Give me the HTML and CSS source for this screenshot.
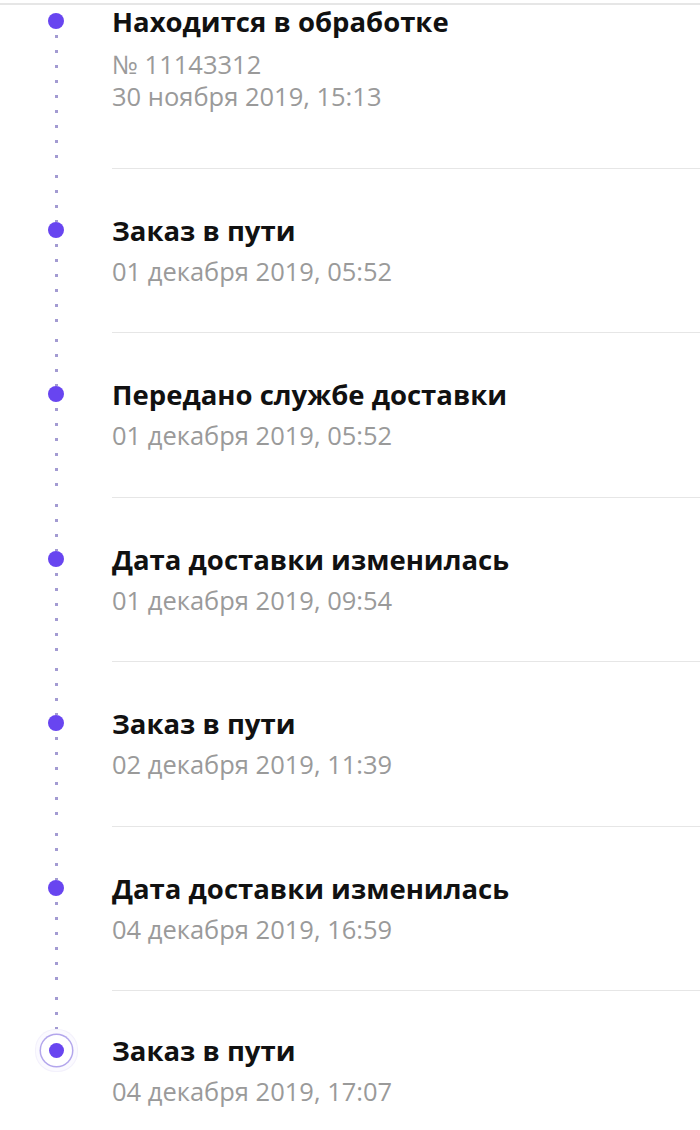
FILE: index.html
```html
<!DOCTYPE html>
<html lang="ru">
<head>
    <meta charset="UTF-8">
    <meta name="viewport" content="width=device-width, initial-scale=1.0">
    <title>Статус заказа</title>
    <link rel="stylesheet" href="styles.css">
</head>
<body>

<div class="timeline">
    <div class="event event-first">
        <div class="marker">
            <span class="line line-top"></span>
            <span class="dot"></span>
            <span class="line line-bottom"></span>
        </div>
        <div class="info">
            <div class="title">Находится в обработке</div>
            <div class="meta">№ 11143312</div>
            <div class="meta">30 ноября 2019, 15:13</div>
        </div>
    </div>

    <div class="event">
        <div class="marker">
            <span class="line line-top"></span>
            <span class="dot"></span>
            <span class="line line-bottom"></span>
        </div>
        <div class="info">
            <div class="title">Заказ в пути</div>
            <div class="meta">01 декабря 2019, 05:52</div>
        </div>
    </div>

    <div class="event">
        <div class="marker">
            <span class="line line-top"></span>
            <span class="dot"></span>
            <span class="line line-bottom"></span>
        </div>
        <div class="info">
            <div class="title">Передано службе доставки</div>
            <div class="meta">01 декабря 2019, 05:52</div>
        </div>
    </div>

    <div class="event">
        <div class="marker">
            <span class="line line-top"></span>
            <span class="dot"></span>
            <span class="line line-bottom"></span>
        </div>
        <div class="info">
            <div class="title">Дата доставки изменилась</div>
            <div class="meta">01 декабря 2019, 09:54</div>
        </div>
    </div>

    <div class="event">
        <div class="marker">
            <span class="line line-top"></span>
            <span class="dot"></span>
            <span class="line line-bottom"></span>
        </div>
        <div class="info">
            <div class="title">Заказ в пути</div>
            <div class="meta">02 декабря 2019, 11:39</div>
        </div>
    </div>

    <div class="event">
        <div class="marker">
            <span class="line line-top"></span>
            <span class="dot"></span>
            <span class="line line-bottom"></span>
        </div>
        <div class="info">
            <div class="title">Дата доставки изменилась</div>
            <div class="meta">04 декабря 2019, 16:59</div>
        </div>
    </div>

    <div class="event event-current">
        <div class="marker">
            <span class="line line-top"></span>
            <span class="dot"></span>
        </div>
        <div class="info">
            <div class="title">Заказ в пути</div>
            <div class="meta">04 декабря 2019, 17:07</div>
        </div>
    </div>
</div>

</body>
</html>
```

FILE: styles.css
```css
body {
    font-family: "Open Sans", "Liberation Sans", sans-serif;
    margin: 0;
    padding: 0;
    background-color: #fff;
}

.timeline {
    margin-top: 3px;
    border-top: 2px solid #e6e6e6;
}

.event {
    display: flex;
}

.marker {
    width: 112px;
    flex-shrink: 0;
    display: flex;
    flex-direction: column;
    align-items: center;
}

.line {
    width: 3px;
    background-image: linear-gradient(to bottom, #a39bd2 3px, transparent 3px);
    background-size: 3px 15px;
    background-repeat: repeat-y;
    background-position: 0 6px;
}

.line-top {
    height: 53px;
}

.line-bottom {
    flex: 1;
}

.dot {
    width: 16px;
    height: 16px;
    border-radius: 50%;
    background-color: #6845f0;
    flex-shrink: 0;
}

.info {
    flex: 1;
    padding: 45px 0 45.4px;
    border-bottom: 1px solid #e6e6e6;
}

.title {
    font-size: 27.5px;
    line-height: 34px;
    font-weight: 700;
    color: #111;
    margin-bottom: 7px;
}

.meta {
    font-size: 25.5px;
    line-height: 32px;
    color: #9a9a9a;
}

.event-first .line-top {
    height: 8px;
    visibility: hidden;
}

.event-first .info {
    padding: 0 0 56px;
}

.event-first .title {
    margin-bottom: 9px;
}

.event-current .info {
    border-bottom: none;
    padding: 43px 0 20px;
}

.event-current .line-top {
    height: 52px;
}

.event-current .dot {
    width: 15px;
    height: 15px;
    box-shadow: 0 0 0 8px #fff, 0 0 0 9.5px #b3a6ec, 0 0 0 13px #fbfaff, 0 0 0 14px #f3f1fc;
}
```
